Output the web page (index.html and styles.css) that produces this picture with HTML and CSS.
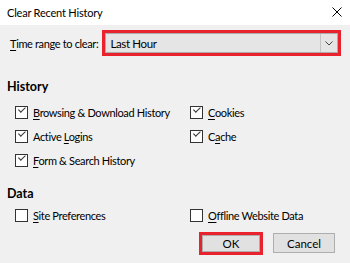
FILE: index.html
```html
<!DOCTYPE html>
<html lang="en">
<head>
	<meta charset="UTF-8">
	<title>Clear Recent History</title>
	<link rel="stylesheet" href="styles.css">
</head>
<body>
	<div class="titlebar">
		<span class="title">Clear Recent History</span>
		<svg class="close" width="10" height="10" viewBox="0 0 10 10"><path d="M0.5 0.5L9.5 9.5M9.5 0.5L0.5 9.5" stroke="#000" stroke-width="1"/></svg>
	</div>
	<div class="content">
		<div class="range-row">
			<span class="range-label"><u>T</u>ime range to clear:</span>
			<div class="mark select-mark">
				<div class="select">
					<span class="select-value">Last Hour</span>
					<span class="select-arrow">
						<svg width="8" height="5" viewBox="0 0 8 5"><path d="M0.5 0.5L4 4L7.5 0.5" fill="none" stroke="#444" stroke-width="1"/></svg>
					</span>
				</div>
			</div>
		</div>

		<div class="heading heading-history">History</div>
		<ul class="checks">
			<li class="check on"><span class="box"></span><span><u>B</u>rowsing &amp; Download History</span></li>
			<li class="check on"><span class="box"></span><span><u>C</u>ookies</span></li>
			<li class="check on"><span class="box"></span><span>Active <u>L</u>ogins</span></li>
			<li class="check on"><span class="box"></span><span>C<u>a</u>che</span></li>
			<li class="check on"><span class="box"></span><span><u>F</u>orm &amp; Search History</span></li>
		</ul>

		<div class="heading heading-data">Data</div>
		<ul class="checks checks-data">
			<li class="check"><span class="box"></span><span><u>S</u>ite Preferences</span></li>
			<li class="check"><span class="box"></span><span><u>O</u>ffline Website Data</span></li>
		</ul>

		<div class="buttons">
			<div class="mark btn-mark"><button class="btn btn-ok">OK</button></div>
			<button class="btn btn-cancel">Cancel</button>
		</div>
	</div>
</body>
</html>
```
FILE: styles.css
```css
html, body{ margin: 0; padding: 0;}
body{
	width: 350px; height: 263px; overflow: hidden;
	font-family: Lato, "Noto Sans", sans-serif; font-size: 11px; letter-spacing: -0.35px; color: #000;
	background: #f0f0f0; white-space: nowrap;
}
u{ text-decoration: underline; text-underline-offset: 2px;}

.titlebar{
	height: 25px; background: #fff; display: flex; align-items: center;
	justify-content: space-between; padding: 0 8px 0 7px; box-sizing: border-box;
}
.title{ font-size: 11px; letter-spacing: -0.2px;}
.close{ display: block; margin-top: -1px;}

.content{ padding: 5px 9px 0 7px;}

.range-row{ display: flex; align-items: center; height: 26px;}
.range-label{ margin-left: 3px; flex: none; margin-right: 4px;}
.mark{ border: 3px solid #e8232d;}
.select-mark{ flex: 1;}
.select{
	display: flex; height: 20px; background: #e5e5e5;
	border: 1px solid #acacac; box-sizing: border-box; align-items: center;
}
.select-value{ flex: 1; padding-left: 4px; font-size: 11.5px;}
.select-arrow{
	width: 16px; height: 100%; border-left: 1px solid #c4c4c4;
	display: flex; align-items: center; justify-content: center;
}
.select-arrow svg{ display: block;}

.heading{ font-weight: bold; font-size: 12.5px; line-height: 16px; letter-spacing: 0;}
.heading-history{ margin-top: 23px;}
.heading-data{ margin-top: 14px;}

.checks{
	list-style: none; margin: 0; padding: 0 0 0 8px;
	display: grid; grid-template-columns: 175px 1fr; grid-auto-rows: 23.7px;
	margin-top: 6px;
}
.checks-data{ margin-top: 2px;}
.check{ display: flex; align-items: center;}
.box{
	width: 13px; height: 13px; box-sizing: border-box; border: 1px solid #333;
	background: #fff; margin-right: 5px; position: relative; flex: none;
}
.check.on .box::after{
	content: ''; position: absolute; left: 2px; top: 1px; width: 6px; height: 3px;
	border-left: 1px solid #333; border-bottom: 1px solid #333;
	transform: translate(0, 2px) rotate(-45deg); transform-origin: 0 0;
}

.buttons{ display: flex; justify-content: flex-end; align-items: center; margin-top: 4px; padding-right: 6px;}
.btn{
	font-family: inherit; font-size: 11.5px; color: #000; background: #e1e1e1;
	border: 1px solid #adadad; padding: 0; margin: 0; display: block;
}
.btn-mark{ margin-right: 10px;}
.btn-ok{ width: 58px; height: 17px; line-height: 15px;}
.btn-cancel{ width: 62px; height: 20px;}
```
